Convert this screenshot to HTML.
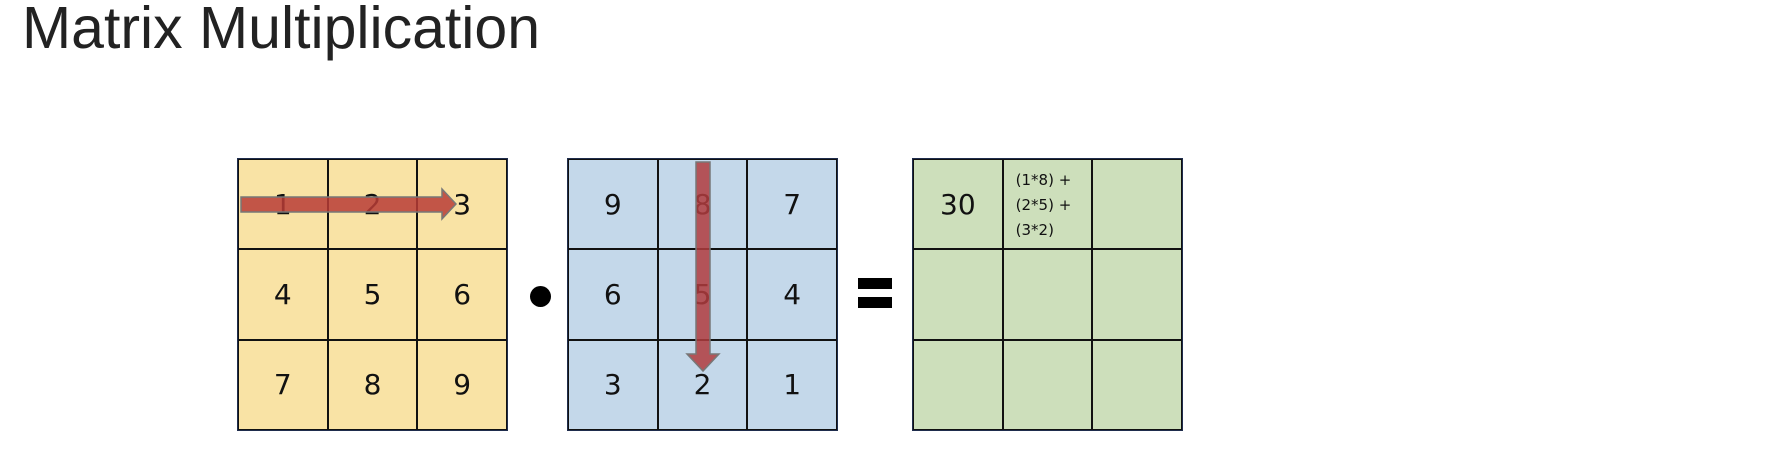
<!DOCTYPE html>
<html><head><meta charset="utf-8"><style>
body{margin:0;width:1778px;height:450px;background:#fff;position:relative;overflow:hidden;font-family:"Liberation Sans",sans-serif}
.t{position:absolute;left:22px;top:-6px;font-size:59px;color:#222}
.g{position:absolute;top:158px;width:271px;height:273px;display:grid;grid-template-columns:repeat(3,1fr);grid-template-rows:repeat(3,1fr);border:1.5px solid #1f2d4d;box-sizing:border-box}
.g div{border:1px solid #111;display:flex;align-items:center;justify-content:center;font-family:"DejaVu Sans","Liberation Sans",sans-serif;font-size:28px;color:#111}
.y{left:237px;background:#f9e3a5}.b{left:567px;background:#c4d8ea}.gr{left:912px;background:#cddfbb}
.s{font-size:15px!important;line-height:25px;align-items:flex-start!important;justify-content:flex-start!important;padding:8px 0 0 12px}
</style></head><body>
<div class="t">Matrix Multiplication</div>
<div class="g y"><div>1</div><div>2</div><div>3</div><div>4</div><div>5</div><div>6</div><div>7</div><div>8</div><div>9</div></div>
<div class="g b"><div>9</div><div>8</div><div>7</div><div>6</div><div>5</div><div>4</div><div>3</div><div>2</div><div>1</div></div>
<div class="g gr"><div>30</div><div class="s">(1*8) +<br>(2*5) +<br>(3*2)</div><div></div><div></div><div></div><div></div><div></div><div></div><div></div></div>
<div style="position:absolute;left:530px;top:286px;width:21px;height:21px;border-radius:50%;background:#000"></div>
<div style="position:absolute;left:858px;top:278px;width:34px;height:11px;background:#000"></div>
<div style="position:absolute;left:858px;top:297px;width:34px;height:11px;background:#000"></div>
<svg width="1778" height="450" style="position:absolute;left:0;top:0">
<polygon points="241,197 442,197 442,189 456,204 442,219 442,212 241,212" fill="#b83c36" fill-opacity="0.85" stroke="#777" stroke-width="1.5"/>
<polygon points="696,162 710,162 710,354 719,354 703,371 687,354 696,354" fill="#b03c3e" fill-opacity="0.85" stroke="#777" stroke-width="1.5"/>
</svg>
</body></html>
